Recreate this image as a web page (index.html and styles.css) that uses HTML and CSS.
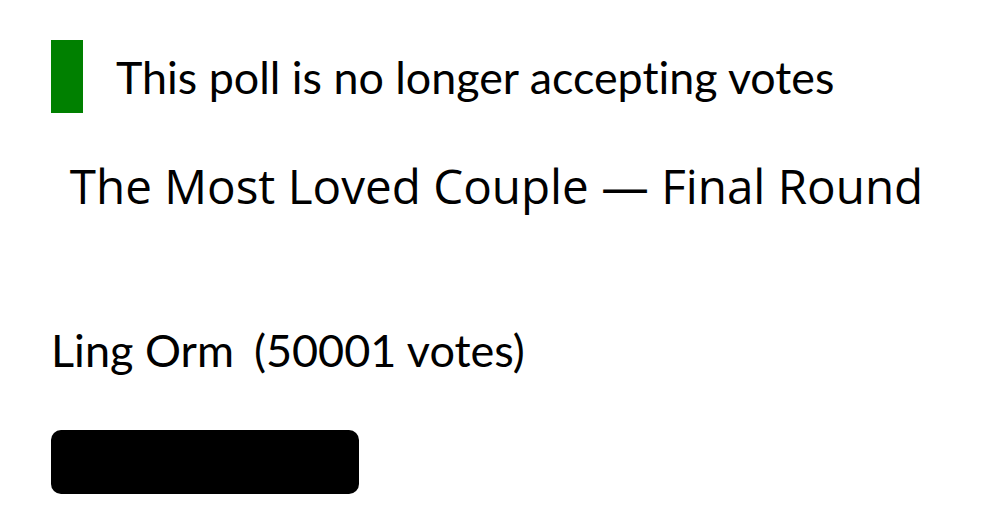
FILE: index.html
```html
<!DOCTYPE html>
<html lang="en">
  <head>
    <meta charset="UTF-8" />
    <meta name="viewport" content="width=device-width, initial-scale=1.0" />
    <title>Poll results</title>
    <link rel="stylesheet" href="styles.css">
  </head>
  <body>
    <div class="poll">
      <div class="status">
        <span class="status-mark"></span>
        <span class="status-text">This poll is no longer accepting votes</span>
      </div>
      <h1 class="poll-title">The Most Loved Couple — Final Round</h1>
      <div class="option">
        <div class="option-label">
          <span class="option-name">Ling Orm</span>
          <span class="option-votes">(50001 votes)</span>
        </div>
        <div class="option-bar" style="width: 308px"></div>
      </div>
    </div>
  </body>
</html>
```

FILE: styles.css
```css
body {
  margin: 0;
  background: #fff;
  color: #000;
  font-family: Lato, "Liberation Sans", sans-serif;
  font-variant-ligatures: none;
}
.poll {
  padding: 40px 51px;
  display: flex;
  flex-direction: column;
}
.status {
  display: flex;
  align-items: center;
  gap: 33px;
}
.status-mark {
  width: 32px;
  height: 73px;
  background: #008000;
}
.status-text {
  font-size: 44.8px;
}
.poll-title {
  margin: 40px -20px 0;
  font-family: "Open Sans", sans-serif;
  font-weight: 400;
  font-size: 47.6px;
  text-align: center;
  white-space: nowrap;
}
.option {
  margin-top: 105px;
  display: flex;
  flex-direction: column;
  gap: 53px;
}
.option-label {
  display: flex;
  gap: 20px;
  font-size: 45px;
}
.option-bar {
  height: 64px;
  background: #000;
  border-radius: 10px;
}
```
